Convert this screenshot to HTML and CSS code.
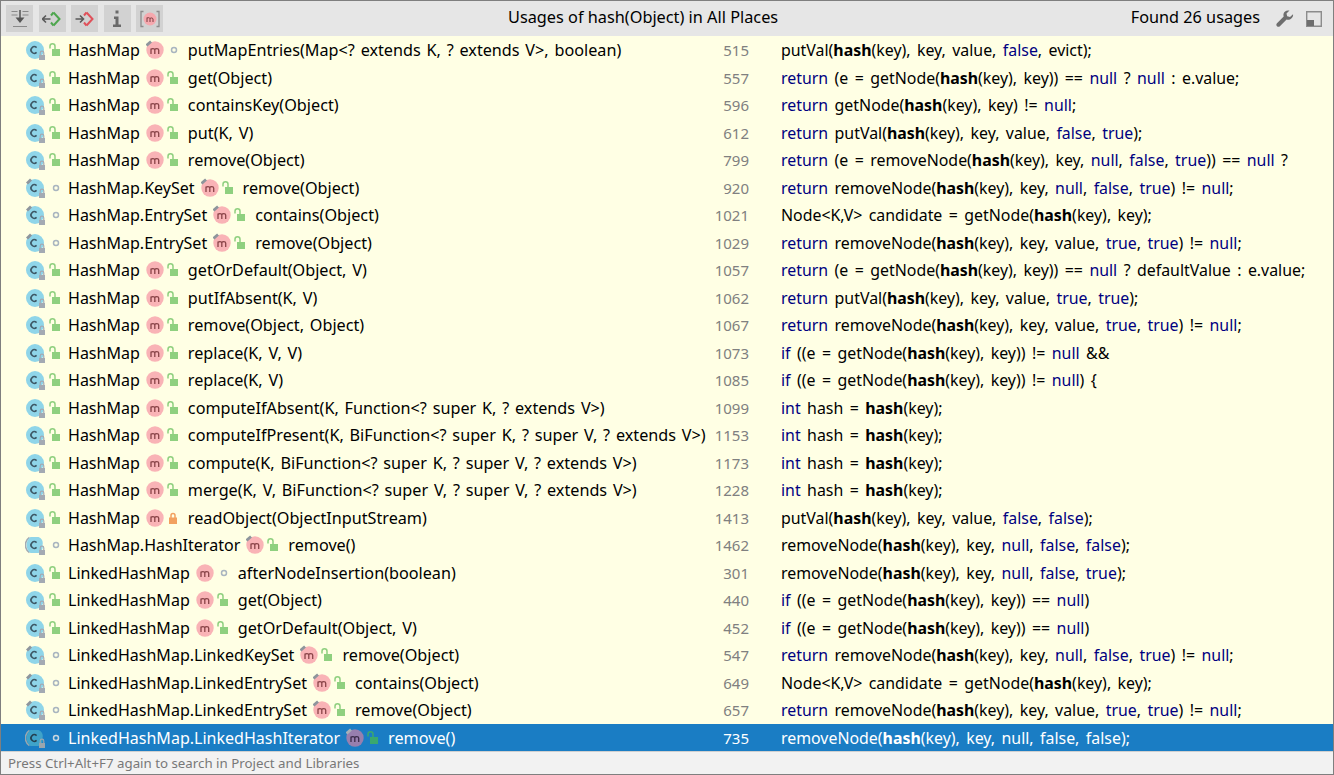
FILE: index.html
```html
<!DOCTYPE html>
<html lang="en">
<head>
<meta charset="utf-8">
<title>Usages of hash(Object)</title>
<link rel="stylesheet" href="styles.css">
</head>
<body>
<svg class="defs" aria-hidden="true">
  <symbol id="cls" viewBox="0 0 24 24">
    <circle class="cls-fill" cx="10" cy="12" r="9"/>
    <path class="cls-c" d="M11.600 9.600a3.300 3.300 0 1 0 0 4.800"/>
    <path class="lock" d="M14 17h6v5h-6z"/><path class="lock-s" d="M15.200 17v-2a1.800 1.800 0 0 1 3.600 0v2"/>
  </symbol>
  <symbol id="clsp" viewBox="0 0 24 24">
    <circle class="cls-fill" cx="10" cy="12" r="9"/>
    <path class="pin" d="M2 7.500l4-4"/>
    <path class="cls-c" d="M11.600 9.600a3.300 3.300 0 1 0 0 4.800"/>
    <path class="lock" d="M14 17h6v5h-6z"/><path class="lock-s" d="M15.200 17v-2a1.800 1.800 0 0 1 3.600 0v2"/>
  </symbol>
  <symbol id="clsa" viewBox="0 0 24 24">
    <path class="arc" d="M4.500 4.500a9 9 0 0 0 0 15"/>
    <path class="cls-fill" d="M5.500 4h8a7 7 0 0 1 4 8 7 7 0 0 1-4 8h-8a10 10 0 0 1 0-16z"/>
    <path class="cls-c" d="M11.600 9.600a3.300 3.300 0 1 0 0 4.800"/>
    <path class="lock" d="M14 17h6v5h-6z"/><path class="lock-s" d="M15.200 17v-2a1.800 1.800 0 0 1 3.600 0v2"/>
  </symbol>
  <symbol id="mth" viewBox="0 0 18 20">
    <circle class="m-fill" cx="9" cy="10" r="8.700"/>
    <path class="m-g" d="M5 14V8.500M5 9.500c.6-1 3.600-1.300 3.800.5v4M8.800 9.500c.6-1 3.700-1.300 3.900.5v4"/>
  </symbol>
  <symbol id="mthp" viewBox="0 0 18 20">
    <circle class="m-fill" cx="9" cy="10" r="8.700"/>
    <path class="pin" d="M.5 5.500l4.500-4"/>
    <path class="m-g" d="M5 14V8.500M5 9.500c.6-1 3.600-1.300 3.800.5v4M8.800 9.500c.6-1 3.700-1.300 3.900.5v4"/>
  </symbol>
  <symbol id="open" viewBox="0 0 12 16">
    <path class="v-open" d="M3 7h8v7H3z"/><path class="v-open-s" d="M1 6.500V4.200a2.500 2.500 0 0 1 5 0V7"/>
  </symbol>
  <symbol id="dot" viewBox="0 0 12 16">
    <circle class="v-dot" cx="7" cy="8" r="2.500"/>
  </symbol>
  <symbol id="priv" viewBox="0 0 12 16">
    <path class="v-priv" d="M2 7.500h8v6.500H2z"/><path class="v-priv-s" d="M4 8V5.500a2 2 0 0 1 4 0V8"/>
  </symbol>
</svg>

<main class="window">
  <header class="toolbar">
    <div class="tools">
      <span class="tool"><svg viewBox="0 0 20 20"><path class="g1" d="M1.500 2.500h6M12.500 2.500h6M1.500 6h6M12.500 6h6M3 17.500h14"/><path class="g2" d="M10 1v9"/><path class="g3" d="M5.500 8.500h9L10 14z"/></svg></span>
      <span class="tool"><svg viewBox="0 0 20 20"><path class="d-green" d="M11.500 3.500l6 6.500-6 6.500"/><path class="d-green" d="M9 6.500l2.500-3M9 13.500l2.500 3"/><path class="a-dark" d="M.5 10h8M4 6.500L.5 10 4 13.500"/></svg></span>
      <span class="tool"><svg viewBox="0 0 20 20"><path class="d-red" d="M11.500 3.500l6 6.500-6 6.500"/><path class="d-red" d="M9 6.500l2.500-3M9 13.500l2.500 3"/><path class="a-dark" d="M.5 10h8M5 6.500L8.500 10 5 13.500"/></svg></span>
      <span class="tool"><svg viewBox="0 0 20 20"><path class="i-g" d="M8.500 1.500h3v3h-3zM7 7.500h4.500v8H14V18H6v-2.500h2.500v-5.500H7z"/></svg></span>
      <span class="tool"><svg viewBox="0 0 20 20"><path class="br" d="M3.500 2.500H1v15h2.500M16.500 2.500H19v15h-2.500"/><circle class="m-fill-t" cx="10" cy="10" r="6.500"/><path class="m-g-t" d="M7 13V8.500M7 9.300c.4-.8 2.800-1 3 .4V13M10 9.700c.4-1 2.900-1.100 3 .4V13"/></svg></span>
    </div>
    <h1 class="title">Usages of hash(Object) in All Places</h1>
    <div class="found">Found 26 usages</div>
    <svg class="wrench" viewBox="0 0 18 18"><path d="M17 4.200l-3 2.800-2.800-.8-.7-2.700L13.500.6C10.800-.2 8 1.200 7.500 4c-.2 1 0 1.800.2 2.500L1 13.200c-.9.900-.9 2.100 0 3 .8.800 2.100.800 2.900 0l6.700-6.600c.8.300 1.700.3 2.600.100 2.700-.6 4.400-3.300 3.800-5.500z"/></svg>
    <svg class="dock" viewBox="0 0 16 16"><path class="dock-o" d="M.7.7h14.600v14.600H.7z"/><path class="dock-f" d="M1 9h7v6H1z"/></svg>
  </header>

  <section class="list">
    <div class="row"><svg class="ci"><use href="#cls"/></svg><svg class="vi"><use href="#open"/></svg><div class="sig">HashMap<svg class="mi"><use href="#mthp"/></svg><svg class="vm"><use href="#dot"/></svg><span class="fn">putMapEntries(Map&lt;? extends K, ? extends V&gt;, boolean)</span></div><div class="ln">515</div><div class="code">putVal(<b>hash</b>(key), key, value, <i>false</i>, evict);</div></div>
    <div class="row"><svg class="ci"><use href="#cls"/></svg><svg class="vi"><use href="#open"/></svg><div class="sig">HashMap<svg class="mi"><use href="#mth"/></svg><svg class="vm"><use href="#open"/></svg><span class="fn">get(Object)</span></div><div class="ln">557</div><div class="code"><i>return</i> (e = getNode(<b>hash</b>(key), key)) == <i>null</i> ? <i>null</i> : e.value;</div></div>
    <div class="row"><svg class="ci"><use href="#cls"/></svg><svg class="vi"><use href="#open"/></svg><div class="sig">HashMap<svg class="mi"><use href="#mth"/></svg><svg class="vm"><use href="#open"/></svg><span class="fn">containsKey(Object)</span></div><div class="ln">596</div><div class="code"><i>return</i> getNode(<b>hash</b>(key), key) != <i>null</i>;</div></div>
    <div class="row"><svg class="ci"><use href="#cls"/></svg><svg class="vi"><use href="#open"/></svg><div class="sig">HashMap<svg class="mi"><use href="#mth"/></svg><svg class="vm"><use href="#open"/></svg><span class="fn">put(K, V)</span></div><div class="ln">612</div><div class="code"><i>return</i> putVal(<b>hash</b>(key), key, value, <i>false</i>, <i>true</i>);</div></div>
    <div class="row"><svg class="ci"><use href="#cls"/></svg><svg class="vi"><use href="#open"/></svg><div class="sig">HashMap<svg class="mi"><use href="#mth"/></svg><svg class="vm"><use href="#open"/></svg><span class="fn">remove(Object)</span></div><div class="ln">799</div><div class="code"><i>return</i> (e = removeNode(<b>hash</b>(key), key, <i>null</i>, <i>false</i>, <i>true</i>)) == <i>null</i> ?</div></div>
    <div class="row"><svg class="ci"><use href="#clsp"/></svg><svg class="vi"><use href="#dot"/></svg><div class="sig">HashMap.KeySet<svg class="mi"><use href="#mthp"/></svg><svg class="vm"><use href="#open"/></svg><span class="fn">remove(Object)</span></div><div class="ln">920</div><div class="code"><i>return</i> removeNode(<b>hash</b>(key), key, <i>null</i>, <i>false</i>, <i>true</i>) != <i>null</i>;</div></div>
    <div class="row"><svg class="ci"><use href="#clsp"/></svg><svg class="vi"><use href="#dot"/></svg><div class="sig">HashMap.EntrySet<svg class="mi"><use href="#mthp"/></svg><svg class="vm"><use href="#open"/></svg><span class="fn">contains(Object)</span></div><div class="ln">1021</div><div class="code">Node&lt;K,V&gt; candidate = getNode(<b>hash</b>(key), key);</div></div>
    <div class="row"><svg class="ci"><use href="#clsp"/></svg><svg class="vi"><use href="#dot"/></svg><div class="sig">HashMap.EntrySet<svg class="mi"><use href="#mthp"/></svg><svg class="vm"><use href="#open"/></svg><span class="fn">remove(Object)</span></div><div class="ln">1029</div><div class="code"><i>return</i> removeNode(<b>hash</b>(key), key, value, <i>true</i>, <i>true</i>) != <i>null</i>;</div></div>
    <div class="row"><svg class="ci"><use href="#cls"/></svg><svg class="vi"><use href="#open"/></svg><div class="sig">HashMap<svg class="mi"><use href="#mth"/></svg><svg class="vm"><use href="#open"/></svg><span class="fn">getOrDefault(Object, V)</span></div><div class="ln">1057</div><div class="code"><i>return</i> (e = getNode(<b>hash</b>(key), key)) == <i>null</i> ? defaultValue : e.value;</div></div>
    <div class="row"><svg class="ci"><use href="#cls"/></svg><svg class="vi"><use href="#open"/></svg><div class="sig">HashMap<svg class="mi"><use href="#mth"/></svg><svg class="vm"><use href="#open"/></svg><span class="fn">putIfAbsent(K, V)</span></div><div class="ln">1062</div><div class="code"><i>return</i> putVal(<b>hash</b>(key), key, value, <i>true</i>, <i>true</i>);</div></div>
    <div class="row"><svg class="ci"><use href="#cls"/></svg><svg class="vi"><use href="#open"/></svg><div class="sig">HashMap<svg class="mi"><use href="#mth"/></svg><svg class="vm"><use href="#open"/></svg><span class="fn">remove(Object, Object)</span></div><div class="ln">1067</div><div class="code"><i>return</i> removeNode(<b>hash</b>(key), key, value, <i>true</i>, <i>true</i>) != <i>null</i>;</div></div>
    <div class="row"><svg class="ci"><use href="#cls"/></svg><svg class="vi"><use href="#open"/></svg><div class="sig">HashMap<svg class="mi"><use href="#mth"/></svg><svg class="vm"><use href="#open"/></svg><span class="fn">replace(K, V, V)</span></div><div class="ln">1073</div><div class="code"><i>if</i> ((e = getNode(<b>hash</b>(key), key)) != <i>null</i> &amp;&amp;</div></div>
    <div class="row"><svg class="ci"><use href="#cls"/></svg><svg class="vi"><use href="#open"/></svg><div class="sig">HashMap<svg class="mi"><use href="#mth"/></svg><svg class="vm"><use href="#open"/></svg><span class="fn">replace(K, V)</span></div><div class="ln">1085</div><div class="code"><i>if</i> ((e = getNode(<b>hash</b>(key), key)) != <i>null</i>) {</div></div>
    <div class="row"><svg class="ci"><use href="#cls"/></svg><svg class="vi"><use href="#open"/></svg><div class="sig">HashMap<svg class="mi"><use href="#mth"/></svg><svg class="vm"><use href="#open"/></svg><span class="fn">computeIfAbsent(K, Function&lt;? super K, ? extends V&gt;)</span></div><div class="ln">1099</div><div class="code"><i>int</i> hash = <b>hash</b>(key);</div></div>
    <div class="row"><svg class="ci"><use href="#cls"/></svg><svg class="vi"><use href="#open"/></svg><div class="sig">HashMap<svg class="mi"><use href="#mth"/></svg><svg class="vm"><use href="#open"/></svg><span class="fn">computeIfPresent(K, BiFunction&lt;? super K, ? super V, ? extends V&gt;)</span></div><div class="ln">1153</div><div class="code"><i>int</i> hash = <b>hash</b>(key);</div></div>
    <div class="row"><svg class="ci"><use href="#cls"/></svg><svg class="vi"><use href="#open"/></svg><div class="sig">HashMap<svg class="mi"><use href="#mth"/></svg><svg class="vm"><use href="#open"/></svg><span class="fn">compute(K, BiFunction&lt;? super K, ? super V, ? extends V&gt;)</span></div><div class="ln">1173</div><div class="code"><i>int</i> hash = <b>hash</b>(key);</div></div>
    <div class="row"><svg class="ci"><use href="#cls"/></svg><svg class="vi"><use href="#open"/></svg><div class="sig">HashMap<svg class="mi"><use href="#mth"/></svg><svg class="vm"><use href="#open"/></svg><span class="fn">merge(K, V, BiFunction&lt;? super V, ? super V, ? extends V&gt;)</span></div><div class="ln">1228</div><div class="code"><i>int</i> hash = <b>hash</b>(key);</div></div>
    <div class="row"><svg class="ci"><use href="#cls"/></svg><svg class="vi"><use href="#open"/></svg><div class="sig">HashMap<svg class="mi"><use href="#mth"/></svg><svg class="vm"><use href="#priv"/></svg><span class="fn">readObject(ObjectInputStream)</span></div><div class="ln">1413</div><div class="code">putVal(<b>hash</b>(key), key, value, <i>false</i>, <i>false</i>);</div></div>
    <div class="row"><svg class="ci"><use href="#clsa"/></svg><svg class="vi"><use href="#dot"/></svg><div class="sig">HashMap.HashIterator<svg class="mi"><use href="#mthp"/></svg><svg class="vm"><use href="#open"/></svg><span class="fn">remove()</span></div><div class="ln">1462</div><div class="code">removeNode(<b>hash</b>(key), key, <i>null</i>, <i>false</i>, <i>false</i>);</div></div>
    <div class="row"><svg class="ci"><use href="#cls"/></svg><svg class="vi"><use href="#open"/></svg><div class="sig">LinkedHashMap<svg class="mi"><use href="#mth"/></svg><svg class="vm"><use href="#dot"/></svg><span class="fn">afterNodeInsertion(boolean)</span></div><div class="ln">301</div><div class="code">removeNode(<b>hash</b>(key), key, <i>null</i>, <i>false</i>, <i>true</i>);</div></div>
    <div class="row"><svg class="ci"><use href="#cls"/></svg><svg class="vi"><use href="#open"/></svg><div class="sig">LinkedHashMap<svg class="mi"><use href="#mth"/></svg><svg class="vm"><use href="#open"/></svg><span class="fn">get(Object)</span></div><div class="ln">440</div><div class="code"><i>if</i> ((e = getNode(<b>hash</b>(key), key)) == <i>null</i>)</div></div>
    <div class="row"><svg class="ci"><use href="#cls"/></svg><svg class="vi"><use href="#open"/></svg><div class="sig">LinkedHashMap<svg class="mi"><use href="#mth"/></svg><svg class="vm"><use href="#open"/></svg><span class="fn">getOrDefault(Object, V)</span></div><div class="ln">452</div><div class="code"><i>if</i> ((e = getNode(<b>hash</b>(key), key)) == <i>null</i>)</div></div>
    <div class="row"><svg class="ci"><use href="#clsp"/></svg><svg class="vi"><use href="#dot"/></svg><div class="sig">LinkedHashMap.LinkedKeySet<svg class="mi"><use href="#mthp"/></svg><svg class="vm"><use href="#open"/></svg><span class="fn">remove(Object)</span></div><div class="ln">547</div><div class="code"><i>return</i> removeNode(<b>hash</b>(key), key, <i>null</i>, <i>false</i>, <i>true</i>) != <i>null</i>;</div></div>
    <div class="row"><svg class="ci"><use href="#clsp"/></svg><svg class="vi"><use href="#dot"/></svg><div class="sig">LinkedHashMap.LinkedEntrySet<svg class="mi"><use href="#mthp"/></svg><svg class="vm"><use href="#open"/></svg><span class="fn">contains(Object)</span></div><div class="ln">649</div><div class="code">Node&lt;K,V&gt; candidate = getNode(<b>hash</b>(key), key);</div></div>
    <div class="row"><svg class="ci"><use href="#clsp"/></svg><svg class="vi"><use href="#dot"/></svg><div class="sig">LinkedHashMap.LinkedEntrySet<svg class="mi"><use href="#mthp"/></svg><svg class="vm"><use href="#open"/></svg><span class="fn">remove(Object)</span></div><div class="ln">657</div><div class="code"><i>return</i> removeNode(<b>hash</b>(key), key, value, <i>true</i>, <i>true</i>) != <i>null</i>;</div></div>
    <div class="row selected"><svg class="ci"><use href="#clsa"/></svg><svg class="vi"><use href="#dot"/></svg><div class="sig">LinkedHashMap.LinkedHashIterator<svg class="mi"><use href="#mthp"/></svg><svg class="vm"><use href="#open"/></svg><span class="fn">remove()</span></div><div class="ln">735</div><div class="code">removeNode(<b>hash</b>(key), key, <i>null</i>, <i>false</i>, <i>false</i>);</div></div>
  </section>

  <footer class="status">Press Ctrl+Alt+F7 again to search in Project and Libraries</footer>
</main>
</body>
</html>
```
FILE: styles.css
```css
* { box-sizing: border-box; }
html, body { margin: 0; padding: 0; height: 100%; overflow: hidden; }
body { font-family: "Noto Sans", "Open Sans", "Liberation Sans", sans-serif; background: #f2f2f2; color: #000; }
.defs { width: 0; height: 0; position: absolute; }

.window { width: 1334px; height: 775px; border: 1px solid #7f7f7f; display: flex; flex-direction: column; background: #f2f2f2; }

.toolbar { height: 35px; flex: none; background: #e6e6e6; display: flex; align-items: center; padding: 0 11px 0 5px; }
.tools { display: flex; gap: 5.500px; width: 485px; flex: none; }
.tool { width: 27px; height: 27px; background: #d2d2d2; display: flex; align-items: center; justify-content: center; }
.tool svg { width: 20px; height: 20px; }
.title { font-size: 16.300px; font-weight: 400; margin: 0; flex: 1; text-align: left; padding-left: 17px; color: #000; line-height: 1; padding-bottom: 2px; }
.found { font-size: 16.250px; margin-right: 16px; line-height: 1; padding-bottom: 2px; }
.wrench { width: 18px; height: 18px; fill: #6e6e6e; margin-right: 12px; }
.dock { width: 16px; height: 16px; }
.dock-o { fill: none; stroke: #8c8c8c; stroke-width: 1.400; }
.dock-f { fill: #6e6e6e; }

.g1 { fill: none; stroke: #8a8a8a; stroke-width: 1; }
.g2 { fill: none; stroke: #555; stroke-width: 1.500; }
.g3 { fill: #555; }
.d-green, .d-red, .a-dark { fill: none; stroke-width: 2; }
.d-green { stroke: #4ea64e; }
.d-red { stroke: #e0515a; }
.a-dark { stroke: #5a5a5a; stroke-width: 1.600; }
.i-g { fill: #6a6a6a; }
.br { fill: none; stroke: #8c8c8c; stroke-width: 1.300; }
.m-fill-t { fill: #f5a8ae; }
.m-g-t { fill: none; stroke: #7a3a3e; stroke-width: 1; }

.list { flex: none; height: 715px; background: #ffffe4; display: flex; flex-direction: column; }
.row { flex: 1 1 0; display: flex; align-items: center; padding: 0.600px 0 0 24px; font-size: 16px; line-height: 20px; white-space: nowrap; min-height: 0;
  --cf: #8fd5e9; --cg: #3d5866; --lk: #a3aab3; --pin: #8e959c; --mf: #f9b3b6; --mg: #8a4448; --vo: #8fd07f; --vd: #a9b5bf; --vp: #f2a15f; --kw: #000080; --lnc: #808080; }
.row.selected { background: #1a7dc4; color: #fff;
  --cf: #3fa3c9; --cg: #24404f; --lk: #9aa6ae; --pin: #a6b0b8; --mf: #977fae; --mg: #3b2c4a; --vo: #3aa86e; --vd: #c9d6df; --kw: #fff; --lnc: #fff; }

.ci { width: 24px; height: 24px; flex: none; }
.vi { width: 12px; height: 16px; flex: none; margin-right: 7px; }
.sig { width: 639px; flex: none; display: flex; align-items: center; font-size: 16.050px; }
.fn { font-size: 16.200px; word-spacing: 1.600px; }
.mi { width: 18px; height: 20px; flex: none; margin-left: 6px; }
.vm { width: 12px; height: 16px; flex: none; margin-left: 3px; margin-right: 9px; }
.ln { width: 42px; flex: none; text-align: right; color: var(--lnc); margin-right: 32px; font-size: 15px; }
.code { flex: 1; font-size: 15.900px; word-spacing: 2.300px; }
.code i { font-style: normal; color: var(--kw); }
.code b { font-weight: 700; }

.cls-fill { fill: var(--cf); }
.cls-c { fill: none; stroke: var(--cg); stroke-width: 1.600; }
.lock { fill: var(--lk); }
.lock-s { fill: none; stroke: var(--lk); stroke-width: 1.200; }
.pin { fill: none; stroke: var(--pin); stroke-width: 2.800; }
.arc { fill: none; stroke: var(--lk); stroke-width: 1.600; }
.m-fill { fill: var(--mf); }
.m-g { fill: none; stroke: var(--mg); stroke-width: 1.300; }
.v-open { fill: var(--vo); }
.v-open-s { fill: none; stroke: var(--vo); stroke-width: 1.500; }
.v-dot { fill: none; stroke: var(--vd); stroke-width: 1.500; }
.v-priv { fill: var(--vp); }
.v-priv-s { fill: none; stroke: var(--vp); stroke-width: 1.500; }

.status { flex: 1; font-size: 13.300px; color: #787878; padding-left: 7px; display: flex; align-items: center; border-top: 1px solid #d0d0d0; }
```
